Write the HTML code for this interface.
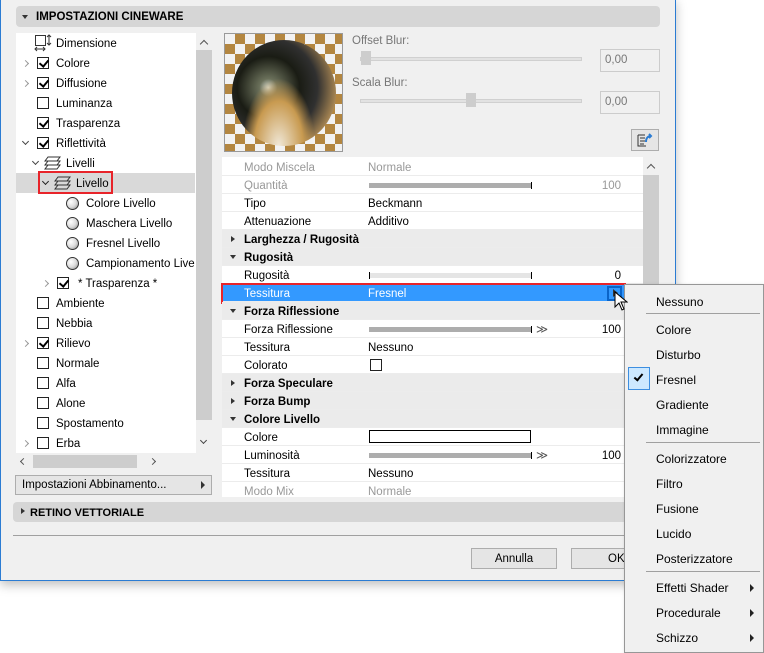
<!DOCTYPE html>
<html><head><meta charset="utf-8"><style>
*{margin:0;padding:0;box-sizing:border-box}
body{width:764px;height:653px;background:#fff;position:relative;overflow:hidden;font-family:"Liberation Sans",sans-serif;font-size:11.5px;color:#000}
.a{position:absolute}
.dlg{left:0;top:-2px;width:676px;height:583px;background:#f0f0f0;border-left:1px solid #2b7cd3;border-right:1px solid #2b7cd3;border-bottom:1px solid #2b7cd3;box-shadow:0 4px 10px rgba(0,0,0,.25)}
.hdr{background:#d6d6d6;border-radius:4px;font-weight:bold;font-size:11px}
.t{white-space:nowrap;line-height:20px;padding-top:1px}
.cb{width:12px;height:12px;border:1px solid #222;background:#fff}
.chk::after{content:"";position:absolute;left:3px;top:0px;width:4px;height:7px;border:solid #000;border-width:0 2px 2px 0;transform:rotate(40deg)}
.ar{color:#999;font-size:10px}
.r{left:222px;width:421px;height:18px;border-bottom:1px solid #ececec;background:#fff;line-height:18px;white-space:nowrap;padding-top:1px}
.r .l{position:absolute;left:22px}
.r .v{position:absolute;left:146px}
.g{background:#ebebeb;font-weight:bold}
.g .l{left:22px}
.dis{color:#999}
.bar{position:absolute;left:147px;top:7px;height:5px;width:163px;background:#adadad}
.bar::after{content:"";position:absolute;right:0;top:-1px;width:1px;height:7px;background:#000}
.tri{position:absolute;left:9px;top:6px;width:0;height:0;border-left:4px solid #333;border-top:3.5px solid transparent;border-bottom:3.5px solid transparent}
.trd{position:absolute;left:8px;top:7px;width:0;height:0;border-top:4px solid #333;border-left:3.5px solid transparent;border-right:3.5px solid transparent}
.num{position:absolute;right:22px}
.ball{width:13px;height:13px;border-radius:50%;border:1px solid #333;background:radial-gradient(circle at 35% 35%,#fff,#ddd 50%,#888)}
.mi{left:656px;font-size:12px;line-height:16px;padding-top:1px}
.sep{left:646px;width:114px;height:1px;background:#a0a0a0}
.sub{left:750px;width:0;height:0;border-left:4px solid #222;border-top:4px solid transparent;border-bottom:4px solid transparent}
.chev{position:absolute;width:5px;height:5px;border:solid #999;border-width:1.5px 1.5px 0 0;transform:rotate(45deg)}
.chevd{position:absolute;width:5px;height:5px;border:solid #444;border-width:0 1.5px 1.5px 0;transform:rotate(45deg)}
</style></head><body>
<div class="a dlg"></div>
<div class="a hdr" style="left:16px;top:6px;width:644px;height:21px"></div>
<div class="a" style="left:22px;top:15px;border-top:4px solid #333;border-left:3.5px solid transparent;border-right:3.5px solid transparent"></div>
<div class="a t" style="left:36px;top:6px;font-weight:bold;font-size:11.5px;line-height:21px">IMPOSTAZIONI CINEWARE</div>

<div class="a" style="left:16px;top:33px;width:180px;height:420px;background:#fff"></div>
<div class="a" style="left:196px;top:33px;width:16px;height:420px;background:#f0f0f0"></div>
<div class="a" style="left:196px;top:50px;width:16px;height:370px;background:#cdcdcd"></div>
<div class="a" style="left:201px;top:41px;width:6px;height:6px;border:solid #555;border-width:1.5px 0 0 1.5px;transform:rotate(45deg)"></div>
<div class="a chevd" style="left:201px;top:438px"></div>
<div class="a" style="left:16px;top:453px;width:196px;height:17px;background:#f0f0f0"></div>
<div class="a" style="left:33px;top:455px;width:104px;height:13px;background:#cdcdcd"></div>
<div class="a" style="left:21px;top:459px;width:5px;height:5px;border:solid #555;border-width:0 0 1.5px 1.5px;transform:rotate(45deg)"></div>
<div class="a" style="left:150px;top:459px;width:5px;height:5px;border:solid #555;border-width:1.5px 1.5px 0 0;transform:rotate(45deg)"></div>
<div class="a" style="left:16px;top:173px;width:179px;height:20px;background:#d9d9d9"></div>

<svg class="a" style="left:34px;top:34px" width="18" height="18"><rect x="1.5" y="1.5" width="10" height="10" fill="none" stroke="#333"/><path d="M15 1v10M13 3l2-2 2 2M13 9l2 2 2-2M1 15h10M3 13l-2 2 2 2M9 13l2 2-2 2" stroke="#333" fill="none"/></svg>
<div class="a t" style="left:56px;top:33px">Dimensione</div>

<div class="a chev" style="left:23px;top:61px"></div><div class="a cb chk" style="left:37px;top:57px"></div><div class="a t" style="left:56px;top:53px">Colore</div>
<div class="a chev" style="left:23px;top:81px"></div><div class="a cb chk" style="left:37px;top:77px"></div><div class="a t" style="left:56px;top:73px">Diffusione</div>
<div class="a cb" style="left:37px;top:97px"></div><div class="a t" style="left:56px;top:93px">Luminanza</div>
<div class="a cb chk" style="left:37px;top:117px"></div><div class="a t" style="left:56px;top:113px">Trasparenza</div>
<div class="a chevd" style="left:23px;top:139px"></div><div class="a cb chk" style="left:37px;top:137px"></div><div class="a t" style="left:56px;top:133px">Riflettività</div>
<div class="a chevd" style="left:33px;top:159px"></div>
<svg class="a" style="left:44px;top:155px" width="18" height="16"><path d="M4 2h12l-3 4H1zM4 6h12l-3 4H1zM4 10h12l-3 4H1z" fill="none" stroke="#333"/></svg>
<div class="a t" style="left:66px;top:153px">Livelli</div>
<div class="a" style="left:38px;top:171px;width:75px;height:23px;border:2px solid #e8242a"></div>
<div class="a chevd" style="left:43px;top:179px;border-color:#222"></div>
<svg class="a" style="left:54px;top:175px" width="18" height="16"><path d="M4 2h12l-3 4H1zM4 6h12l-3 4H1zM4 10h12l-3 4H1z" fill="none" stroke="#333"/></svg>
<div class="a t" style="left:76px;top:173px">Livello</div>
<div class="a ball" style="left:66px;top:197px"></div><div class="a t" style="left:86px;top:193px">Colore Livello</div>
<div class="a ball" style="left:66px;top:217px"></div><div class="a t" style="left:86px;top:213px">Maschera Livello</div>
<div class="a ball" style="left:66px;top:237px"></div><div class="a t" style="left:86px;top:233px">Fresnel Livello</div>
<div class="a ball" style="left:66px;top:257px"></div><div class="a t" style="left:86px;top:253px;width:109px;overflow:hidden">Campionamento Livello</div>
<div class="a chev" style="left:43px;top:281px"></div><div class="a cb chk" style="left:57px;top:277px"></div><div class="a t" style="left:78px;top:273px">* Trasparenza *</div>
<div class="a cb" style="left:37px;top:297px"></div><div class="a t" style="left:56px;top:293px">Ambiente</div>
<div class="a cb" style="left:37px;top:317px"></div><div class="a t" style="left:56px;top:313px">Nebbia</div>
<div class="a chev" style="left:23px;top:341px"></div><div class="a cb chk" style="left:37px;top:337px"></div><div class="a t" style="left:56px;top:333px">Rilievo</div>
<div class="a cb" style="left:37px;top:357px"></div><div class="a t" style="left:56px;top:353px">Normale</div>
<div class="a cb" style="left:37px;top:377px"></div><div class="a t" style="left:56px;top:373px">Alfa</div>
<div class="a cb" style="left:37px;top:397px"></div><div class="a t" style="left:56px;top:393px">Alone</div>
<div class="a cb" style="left:37px;top:417px"></div><div class="a t" style="left:56px;top:413px">Spostamento</div>
<div class="a chev" style="left:23px;top:441px"></div><div class="a cb" style="left:37px;top:437px"></div><div class="a t" style="left:56px;top:433px">Erba</div>

<div class="a" style="left:15px;top:475px;width:197px;height:20px;background:#e5e5e5;border:1px solid #adadad"></div>
<div class="a t" style="left:22px;top:475px;line-height:19px">Impostazioni Abbinamento...</div>
<div class="a" style="left:201px;top:481px;border-left:4px solid #333;border-top:4px solid transparent;border-bottom:4px solid transparent"></div>

<div class="a" style="left:224px;top:33px;width:119px;height:119px;border:1px solid #999;overflow:hidden;background:repeating-conic-gradient(#b38640 0 25%,#f2f2f2 0 50%) 0 0/20px 20px">
 <div class="a" style="left:7px;top:6px;width:104px;height:106px;border-radius:50%;background:radial-gradient(ellipse at 45% 100%,#f0e8d8 0,#c89a50 30%,transparent 45%),radial-gradient(circle at 35% 45%,#d8dcd0 0,#6a705a 10%,#1a1c14 35%,#303030 55%,#a08050 75%,#e0d0b0 90%,#8a6a40 100%)"></div>
</div>
<div class="a t" style="left:352px;top:30px;color:#777">Offset Blur:</div>
<div class="a" style="left:360px;top:57px;width:222px;height:4px;background:#e2e2e2;border:1px solid #d0d0d0"></div>
<div class="a" style="left:361px;top:51px;width:10px;height:14px;background:#cdcdcd"></div>
<div class="a" style="left:600px;top:49px;width:60px;height:23px;border:1px solid #ccc;background:#f0f0f0;color:#777;padding-left:4px;line-height:21px">0,00</div>
<div class="a t" style="left:352px;top:72px;color:#777">Scala Blur:</div>
<div class="a" style="left:360px;top:99px;width:222px;height:4px;background:#e2e2e2;border:1px solid #d0d0d0"></div>
<div class="a" style="left:466px;top:93px;width:10px;height:14px;background:#cdcdcd"></div>
<div class="a" style="left:600px;top:91px;width:60px;height:23px;border:1px solid #ccc;background:#f0f0f0;color:#777;padding-left:4px;line-height:21px">0,00</div>
<div class="a" style="left:631px;top:129px;width:28px;height:22px;border:1px solid #adadad;background:#e5e5e5"></div>
<svg class="a" style="left:636px;top:132px" width="18" height="16"><path d="M2 3h7M2 3v11h8M4 6h5M4 9h5M4 12h4" stroke="#333" fill="none"/><path d="M10 10c0-4 2-6 5-6M13 2l2 2-2 2" stroke="#2b7cd3" stroke-width="2" fill="none"/></svg>

<div class="a" style="left:222px;top:157px;width:437px;height:340px;background:#fff"></div>
<div class="a" style="left:643px;top:157px;width:16px;height:340px;background:#f0f0f0"></div>
<div class="a" style="left:643px;top:175px;width:16px;height:230px;background:#cdcdcd"></div>
<div class="a" style="left:648px;top:165px;width:6px;height:6px;border:solid #555;border-width:1.5px 0 0 1.5px;transform:rotate(45deg)"></div>

<div class="a r dis" style="top:158px"><span class="l">Modo Miscela</span><span class="v">Normale</span></div>
<div class="a r dis" style="top:176px"><span class="l">Quantità</span><div class="bar"></div><span class="num">100</span></div>
<div class="a r" style="top:194px"><span class="l">Tipo</span><span class="v">Beckmann</span></div>
<div class="a r" style="top:212px"><span class="l">Attenuazione</span><span class="v">Additivo</span></div>
<div class="a r g" style="top:230px"><div class="tri"></div><span class="l">Larghezza / Rugosità</span></div>
<div class="a r g" style="top:248px"><div class="trd"></div><span class="l">Rugosità</span></div>
<div class="a r" style="top:266px"><span class="l">Rugosità</span><div class="bar" style="background:#e5e5e5"></div><div class="a" style="left:147px;top:6px;width:1px;height:7px;background:#000"></div><span class="num">0</span></div>
<div class="a r" style="top:284px;background:#3399ff;color:#fff"><span class="l">Tessitura</span><span class="v">Fresnel</span></div>
<div class="a" style="left:607px;top:286px;width:15px;height:15px;border:2px solid #0a64c8;background:#3399ff"></div>
<div class="a" style="left:613px;top:289px;border-left:5px solid #333;border-top:4.5px solid transparent;border-bottom:4.5px solid transparent"></div>
<div class="a" style="left:221px;top:283px;width:405px;height:21px;border:2px solid #e8242a"></div>
<div class="a r g" style="top:302px"><div class="trd"></div><span class="l">Forza Riflessione</span></div>
<div class="a r" style="top:320px"><span class="l">Forza Riflessione</span><div class="bar"></div><span class="a" style="left:314px;color:#555">&#8811;</span><span class="num">100</span></div>
<div class="a r" style="top:338px"><span class="l">Tessitura</span><span class="v">Nessuno</span></div>
<div class="a r" style="top:356px"><span class="l">Colorato</span><div class="a cb" style="left:148px;top:3px"></div></div>
<div class="a r g" style="top:374px"><div class="tri"></div><span class="l">Forza Speculare</span></div>
<div class="a r g" style="top:392px"><div class="tri"></div><span class="l">Forza Bump</span></div>
<div class="a r g" style="top:410px"><div class="trd"></div><span class="l">Colore Livello</span></div>
<div class="a r" style="top:428px"><span class="l">Colore</span><div class="a" style="left:147px;top:2px;width:162px;height:13px;border:1px solid #000"></div></div>
<div class="a r" style="top:446px"><span class="l">Luminosità</span><div class="bar"></div><span class="a" style="left:314px;color:#555">&#8811;</span><span class="num">100</span></div>
<div class="a r" style="top:464px"><span class="l">Tessitura</span><span class="v">Nessuno</span></div>
<div class="a r dis" style="top:482px;height:15px;overflow:hidden;border:0"><span class="l">Modo Mix</span><span class="v">Normale</span></div>

<div class="a hdr" style="left:13px;top:502px;width:647px;height:20px"></div>
<div class="a" style="left:21px;top:508px;border-left:4px solid #333;border-top:3.5px solid transparent;border-bottom:3.5px solid transparent"></div>
<div class="a t" style="left:30px;top:502px;font-weight:bold;font-size:11px">RETINO VETTORIALE</div>
<div class="a" style="left:13px;top:535px;width:662px;height:1px;background:#a0a0a0"></div>
<div class="a" style="left:471px;top:548px;width:86px;height:21px;border:1px solid #adadad;background:#e5e5e5;text-align:center;line-height:20px">Annulla</div>
<div class="a" style="left:571px;top:548px;width:86px;height:21px;border:1px solid #adadad;background:#e5e5e5;line-height:20px;padding-left:36px">OK</div>

<div class="a" style="left:624px;top:284px;width:140px;height:369px;background:#f0f0f0;border:1px solid #979797;box-shadow:2px 2px 4px rgba(0,0,0,.3)"></div>
<div class="a mi" style="top:293px">Nessuno</div>
<div class="a sep" style="top:313px"></div>
<div class="a mi" style="top:321px">Colore</div>
<div class="a mi" style="top:346px">Disturbo</div>
<div class="a" style="left:628px;top:367px;width:22px;height:23px;background:#cce8ff;border:1px solid #3d8ee0"></div>
<div class="a" style="left:636px;top:372px;width:5px;height:9px;border:solid #000;border-width:0 2px 2px 0;transform:rotate(40deg)"></div>
<div class="a mi" style="top:371px">Fresnel</div>
<div class="a mi" style="top:396px">Gradiente</div>
<div class="a mi" style="top:421px">Immagine</div>
<div class="a sep" style="top:442px"></div>
<div class="a mi" style="top:450px">Colorizzatore</div>
<div class="a mi" style="top:475px">Filtro</div>
<div class="a mi" style="top:500px">Fusione</div>
<div class="a mi" style="top:525px">Lucido</div>
<div class="a mi" style="top:550px">Posterizzatore</div>
<div class="a sep" style="top:571px"></div>
<div class="a mi" style="top:579px">Effetti Shader</div><div class="a sub" style="top:584px"></div>
<div class="a mi" style="top:604px">Procedurale</div><div class="a sub" style="top:609px"></div>
<div class="a mi" style="top:629px">Schizzo</div><div class="a sub" style="top:634px"></div>

<svg class="a" style="left:614px;top:291px" width="14" height="22"><path d="M1 1v15l4-4 3 7 2-1-3-7h6z" fill="#fff" stroke="#000"/></svg>
</body></html>
